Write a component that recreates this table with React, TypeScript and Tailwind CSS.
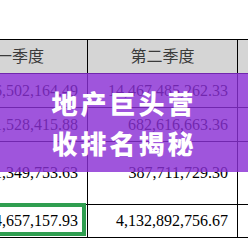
import React from "react";

const serif = { fontFamily: '"Liberation Serif", "Noto Sans CJK SC", serif' };

type Row = { h: string; c1: string; c2: string; c3: string; green?: boolean };

const rows: Row[] = [
  { h: "h-[34px]", c1: "16,502,164.49", c2: "14,467,485,262.33", c3: "" },
  { h: "h-[34px]", c1: "11,528,415.88", c2: "682,616,663.36", c3: "" },
  { h: "h-[63px]", c1: "11,349,753.63", c2: "387,711,729.30", c3: "" },
  { h: "h-[33px]", c1: "34,657,157.93", c2: "4,132,892,756.67", c3: "", green: true },
];

export default function App() {
  return (
    <div className="relative w-[248px] h-[248px] bg-white overflow-hidden" style={serif}>
      <div className="pt-[39px] ml-[-63px] w-[460px]">
        <div className="flex h-[35px] border-y border-black bg-[#d5d5d5] text-[16px] text-[#3a3a3a]">
          <div className="w-[151px] border-r border-black flex items-center justify-center">第一季度</div>
          <div className="w-[150px] border-r border-black flex items-center justify-center">第二季度</div>
          <div className="w-[150px] border-r border-black flex items-center justify-center">第三季度</div>
        </div>
        {rows.map((r, i) => (
          <div key={i} className={`flex ${r.h} border-b border-black text-[16px] text-black`}>
            <div className="relative w-[151px] border-r border-black flex items-center justify-end pr-[9px]">
              {r.green && (
                <div className="absolute left-0 right-[1px] top-[-2px] bottom-[1px] border-[4px] border-[#2f9e50]" />
              )}
              <span className="relative">{r.c1}</span>
            </div>
            <div className="w-[150px] border-r border-black flex items-center justify-end pr-[9px]">{r.c2}</div>
            <div className="w-[150px] border-r border-black flex items-center justify-end pr-[9px]">{r.c3}</div>
          </div>
        ))}
      </div>
      <div className="absolute left-0 right-0 top-[73px] h-[99px] bg-[rgba(138,48,212,0.82)] flex flex-col items-center justify-center">
        <div
          className="text-white text-[26px] leading-[40px] font-black tracking-[3px] text-center"
          style={{ fontFamily: '"Noto Sans CJK SC", sans-serif' }}
        >
          <div>地产巨头营</div>
          <div>收排名揭秘</div>
        </div>
      </div>
    </div>
  );
}
